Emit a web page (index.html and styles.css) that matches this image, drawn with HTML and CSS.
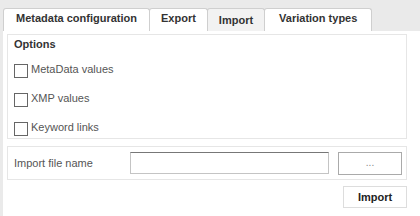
FILE: index.html
```html
<!DOCTYPE html>
<html lang="en">
<head>
    <meta charset="UTF-8">
    <title>Import</title>
    <link rel="stylesheet" href="styles.css">
</head>
<body>
    <div class="tabs">
        <div class="tab tab-first">Metadata configuration</div>
        <div class="tab">Export</div>
        <div class="tab active">Import</div>
        <div class="tab tab-last">Variation types</div>
    </div>
    <div class="panel">
        <div class="group">
            <div class="group-title">Options</div>
            <label class="check-row"><span class="box"></span>MetaData values</label>
            <label class="check-row"><span class="box"></span>XMP values</label>
            <label class="check-row"><span class="box"></span>Keyword links</label>
        </div>
        <div class="file-row">
            <span class="file-label">Import file name</span>
            <div class="file-input"></div>
            <div class="browse-btn">...</div>
        </div>
        <div class="actions">
            <div class="import-btn">Import</div>
        </div>
    </div>
</body>
</html>
```

FILE: styles.css
```css
body {
    margin: 0;
    background-color: #eaeaea;
    font-family: "Liberation Sans", Arial, sans-serif;
    color: #555;
    width: 420px;
    height: 216px;
    overflow: hidden;
}
.tabs {
    display: flex;
    padding: 8px 0 0 3px;
    height: 31px;
    box-sizing: border-box;
}
.tab {
    background-color: #fff;
    border: 1px solid #cfcfcf;
    border-bottom: none;
    border-radius: 3px 3px 0 0;
    font-size: 11px;
    font-weight: bold;
    color: #333;
    padding: 3px 11px 0 11px;
    margin-right: -1px;
}
.tab-first {
    padding: 3px 12px 0 12px;
}
.tab-last {
    padding: 3px 14px 0 14px;
}
.tab.active {
    background-color: #f2f2f2;
    padding-top: 5px;
}
.panel {
    margin-left: 3px;
    background-color: #fff;
    padding: 3px 13px 0 4px;
    height: 185px;
}
.group {
    border: 1px solid #e6e6e6;
    padding: 3px 0 4px 6px;
}
.group-title {
    font-size: 11px;
    font-weight: bold;
    color: #333;
    margin-bottom: 12px;
}
.check-row {
    display: flex;
    align-items: center;
    font-size: 11px;
    color: #555;
    height: 13px;
    margin-bottom: 16px;
}
.check-row:last-child {
    margin-bottom: 1px;
}
.box {
    width: 12px;
    height: 12px;
    border: 1px solid #666;
    margin-right: 3px;
    margin-top: 5px;
}
.file-row {
    display: flex;
    align-items: center;
    border: 1px solid #e6e6e6;
    margin-top: 7px;
    height: 32px;
    padding: 0 4px 0 6px;
}
.file-label {
    font-size: 11px;
    width: 116px;
}
.file-input {
    width: 197px;
    height: 20px;
    border: 1px solid #c4c4c4;
    border-top-color: #777;
}
.browse-btn {
    margin-left: 9px;
    width: 62px;
    height: 21px;
    border: 1px solid #aaa;
    text-align: center;
    font-size: 10px;
    color: #888;
    line-height: 19px;
}
.actions {
    display: flex;
    justify-content: flex-end;
    margin-top: 6px;
}
.import-btn {
    width: 62px;
    height: 20px;
    border: 1px solid #ddd;
    text-align: center;
    font-size: 11px;
    font-weight: bold;
    color: #222;
    line-height: 20px;
}
```
